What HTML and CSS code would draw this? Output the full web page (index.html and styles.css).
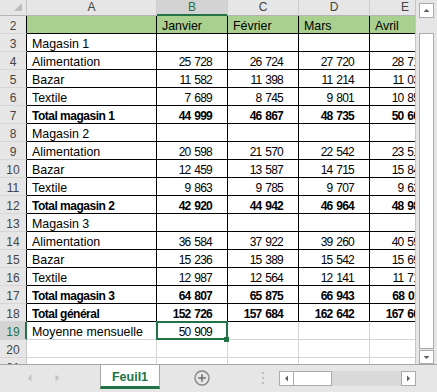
FILE: index.html
```html
<!DOCTYPE html>
<html lang="fr">
<head>
<meta charset="utf-8">
<title>Feuil1</title>
<link rel="stylesheet" href="styles.css">
</head>
<body>
<div class="app">
  <div class="main">
    <div class="sheet">
      <div class="grid">
        <div class="corner"><svg width="27" height="15" viewBox="0 0 27 15"><polygon points="22,3 22,11 14,11" fill="#bcbcbc"/></svg></div>
        <div class="ch">A</div><div class="ch sel">B</div><div class="ch">C</div><div class="ch">D</div><div class="ch">E</div>

        <div class="rh in">2</div><div class="c t g"></div><div class="c t g">Janvier</div><div class="c t g">Février</div><div class="c t g">Mars</div><div class="c t g">Avril</div>

        <div class="rh in">3</div><div class="c t">Magasin 1</div><div class="c t"></div><div class="c t"></div><div class="c t"></div><div class="c t"></div>
        <div class="rh in">4</div><div class="c t">Alimentation</div><div class="c t n">25 728</div><div class="c t n">26 724</div><div class="c t n">27 720</div><div class="c t n">28 716</div>
        <div class="rh in">5</div><div class="c t">Bazar</div><div class="c t n">11 582</div><div class="c t n">11 398</div><div class="c t n">11 214</div><div class="c t n">11 030</div>
        <div class="rh in">6</div><div class="c t">Textile</div><div class="c t n">7 689</div><div class="c t n">8 745</div><div class="c t n">9 801</div><div class="c t n">10 857</div>
        <div class="rh in">7</div><div class="c t b">Total magasin 1</div><div class="c t n b">44 999</div><div class="c t n b">46 867</div><div class="c t n b">48 735</div><div class="c t n b">50 603</div>

        <div class="rh in">8</div><div class="c t">Magasin 2</div><div class="c t"></div><div class="c t"></div><div class="c t"></div><div class="c t"></div>
        <div class="rh in">9</div><div class="c t">Alimentation</div><div class="c t n">20 598</div><div class="c t n">21 570</div><div class="c t n">22 542</div><div class="c t n">23 514</div>
        <div class="rh in">10</div><div class="c t">Bazar</div><div class="c t n">12 459</div><div class="c t n">13 587</div><div class="c t n">14 715</div><div class="c t n">15 843</div>
        <div class="rh in">11</div><div class="c t">Textile</div><div class="c t n">9 863</div><div class="c t n">9 785</div><div class="c t n">9 707</div><div class="c t n">9 629</div>
        <div class="rh in">12</div><div class="c t b">Total magasin 2</div><div class="c t n b">42 920</div><div class="c t n b">44 942</div><div class="c t n b">46 964</div><div class="c t n b">48 986</div>

        <div class="rh in">13</div><div class="c t">Magasin 3</div><div class="c t"></div><div class="c t"></div><div class="c t"></div><div class="c t"></div>
        <div class="rh in">14</div><div class="c t">Alimentation</div><div class="c t n">36 584</div><div class="c t n">37 922</div><div class="c t n">39 260</div><div class="c t n">40 598</div>
        <div class="rh in">15</div><div class="c t">Bazar</div><div class="c t n">15 236</div><div class="c t n">15 389</div><div class="c t n">15 542</div><div class="c t n">15 695</div>
        <div class="rh in">16</div><div class="c t">Textile</div><div class="c t n">12 987</div><div class="c t n">12 564</div><div class="c t n">12 141</div><div class="c t n">11 718</div>
        <div class="rh in">17</div><div class="c t b">Total magasin 3</div><div class="c t n b">64 807</div><div class="c t n b">65 875</div><div class="c t n b">66 943</div><div class="c t n b">68 011</div>
        <div class="rh in">18</div><div class="c t b">Total général</div><div class="c t n b">152 726</div><div class="c t n b">157 684</div><div class="c t n b">162 642</div><div class="c t n b">167 600</div>

        <div class="rh sel">19</div><div class="c">Moyenne mensuelle</div><div class="c n active">50 909</div><div class="c"></div><div class="c"></div><div class="c"></div>
        <div class="rh">20</div><div class="c"></div><div class="c"></div><div class="c"></div><div class="c"></div><div class="c"></div>
        <div class="rh">21</div><div class="c"></div><div class="c"></div><div class="c"></div><div class="c"></div><div class="c"></div>
      </div>
    </div>
    <div class="vscroll">
      <div class="sbtn"><svg width="13" height="13" viewBox="0 0 13 13"><polygon points="3.5,8 9.5,8 6.5,5" fill="#606060"/></svg></div>
      <div class="vthumb"></div>
      <div class="sbtn down"><svg width="13" height="12" viewBox="0 0 13 12"><polygon points="3.5,5 9.5,5 6.5,8" fill="#606060"/></svg></div>
    </div>
  </div>
  <div class="tabbar">
    <div class="nav">
      <svg class="navarrow" width="5" height="8" viewBox="0 0 5 8"><polygon points="4.5,0.5 4.5,7.5 0.5,4" fill="#c4c4c4"/></svg>
      <svg class="navarrow second" width="5" height="8" viewBox="0 0 5 8"><polygon points="0.5,0.5 0.5,7.5 4.5,4" fill="#c4c4c4"/></svg>
    </div>
    <div class="tab">Feuil1</div>
    <svg class="plus" width="16" height="16" viewBox="0 0 16 16"><circle cx="8" cy="8" r="7" fill="none" stroke="#858585" stroke-width="1.4"/><path d="M8 4.2V11.8M4.2 8H11.8" stroke="#6f6f6f" stroke-width="1.5"/></svg>
    <svg class="dots" width="2" height="12" viewBox="0 0 2 12"><rect x="0" y="0" width="2" height="2" fill="#bdbdbd"/><rect x="0" y="5" width="2" height="2" fill="#bdbdbd"/><rect x="0" y="10" width="2" height="2" fill="#bdbdbd"/></svg>
    <div class="hscroll">
      <div class="hbtn"><svg width="13" height="13" viewBox="0 0 13 13"><polygon points="8,3.5 8,9.5 5,6.5" fill="#606060"/></svg></div>
      <div class="hthumb"></div>
      <div class="htrack"></div>
      <div class="hbtn"><svg width="13" height="13" viewBox="0 0 13 13"><polygon points="5,3.5 5,9.5 8,6.5" fill="#606060"/></svg></div>
    </div>
  </div>
</div>
</body>
</html>
```

FILE: styles.css
```css
* { box-sizing: border-box; }
html, body { margin: 0; padding: 0; }
body {
  width: 437px;
  height: 392px;
  overflow: hidden;
  background: #e6e6e6;
  font-family: "Liberation Sans", Arial, sans-serif;
}
.app { display: flex; flex-direction: column; width: 437px; height: 392px; }
.main { display: flex; height: 364px; }
.sheet { width: 415px; height: 364px; overflow: hidden; background: #fff; }
.grid {
  display: grid;
  grid-template-columns: 27px 130px 71px 71px 71px 71px;
  grid-template-rows: 16px;
  grid-auto-rows: 18px;
  width: 441px;
}
.corner {
  background: #e6e6e6;
  border-right: 1px solid #c6c6c6;
  border-bottom: 1px solid #b4b4b4;
}
.corner svg { display: block; }
.ch {
  background: #e6e6e6;
  border-right: 1px solid #cdcdcd;
  border-bottom: 1px solid #b4b4b4;
  color: #444;
  font-size: 12px;
  line-height: 15px;
  text-align: center;
}
.ch.sel {
  background: #d3d3d3;
  color: #217346;
  border-bottom-color: #217346;
  box-shadow: inset 0 -1px 0 #217346;
}
.rh {
  background: #e6e6e6;
  border-right: 1px solid #c6c6c6;
  border-bottom: 1px solid #d6d6d6;
  color: #444;
  font-size: 12px;
  line-height: 14px;
  display: flex;
  align-items: flex-end;
  justify-content: center;
}
.rh.in { border-right-color: #000; }
.rh.sel {
  background: #d3d3d3;
  color: #217346;
  border-right-color: #217346;
  box-shadow: inset -1px 0 0 #217346;
}
.c {
  border-right: 1px solid #d4d4d4;
  border-bottom: 1px solid #d4d4d4;
  display: flex;
  align-items: flex-end;
  padding: 0 5px;
  font-size: 12.4px;
  line-height: 14px;
  white-space: nowrap;
  color: #000;
}
.c.t { border-color: #000; }
.c.g { background: #a9d08e; }
.c.n {
  justify-content: flex-end;
  padding-right: 15px;
  font-size: 12px;
  letter-spacing: -0.8px;
  word-spacing: 1.4px;
}
.c.b { font-weight: bold; font-size: 12px; letter-spacing: -0.5px; }
.c.n.b { font-size: 12px; letter-spacing: -0.8px; word-spacing: 1.4px; }
.c.active { position: relative; }
.c.active::after {
  content: "";
  position: absolute;
  top: -1px; left: -1px; right: -1px; bottom: -1px;
  border: 2px solid #217346;
  z-index: 2;
}
.c.active::before {
  content: "";
  position: absolute;
  right: -2px;
  bottom: -3px;
  width: 5px;
  height: 5px;
  background: #217346;
  z-index: 3;
}

.vscroll {
  width: 22px;
  height: 364px;
  border-left: 1px solid #c6c6c6;
  padding: 3px 0 0 3px;
  display: flex;
  flex-direction: column;
}
.sbtn {
  width: 15px;
  height: 15px;
  background: #fff;
  border: 1px solid #ababab;
}
.sbtn svg { display: block; }
.sbtn.down { height: 14px; margin-top: 1px; }
.vthumb {
  width: 15px;
  height: 317px;
  margin-top: 15px;
  background: #fff;
  border: 1px solid #ababab;
}

.tabbar {
  height: 28px;
  border-top: 1px solid #a6a6a6;
  display: flex;
  align-items: flex-start;
}
.nav { width: 100px; display: flex; padding-left: 27px; padding-top: 9px; }
.navarrow { display: block; }
.navarrow.second { margin-left: 23px; }
.tab {
  width: 60px;
  height: 24px;
  background: #fff;
  border-left: 1px solid #a6a6a6;
  border-right: 1px solid #a6a6a6;
  border-bottom: 3px solid #217346;
  color: #217346;
  font-weight: bold;
  font-size: 12.5px;
  line-height: 18px;
  padding-top: 3px;
  text-align: center;
}
.plus { display: block; margin-left: 34px; margin-top: 5px; }
.dots { display: block; margin-left: 52px; margin-top: 7px; }
.hscroll {
  display: flex;
  width: 137px;
  height: 15px;
  margin-left: 15px;
  margin-top: 6px;
}
.hbtn {
  width: 15px;
  height: 15px;
  background: #fff;
  border: 1px solid #ababab;
}
.hbtn svg { display: block; }
.hthumb {
  width: 38px;
  height: 15px;
  background: #fff;
  border: 1px solid #ababab;
  border-left: none;
}
.htrack { flex: 1; background: #d9d9d9; }
```
